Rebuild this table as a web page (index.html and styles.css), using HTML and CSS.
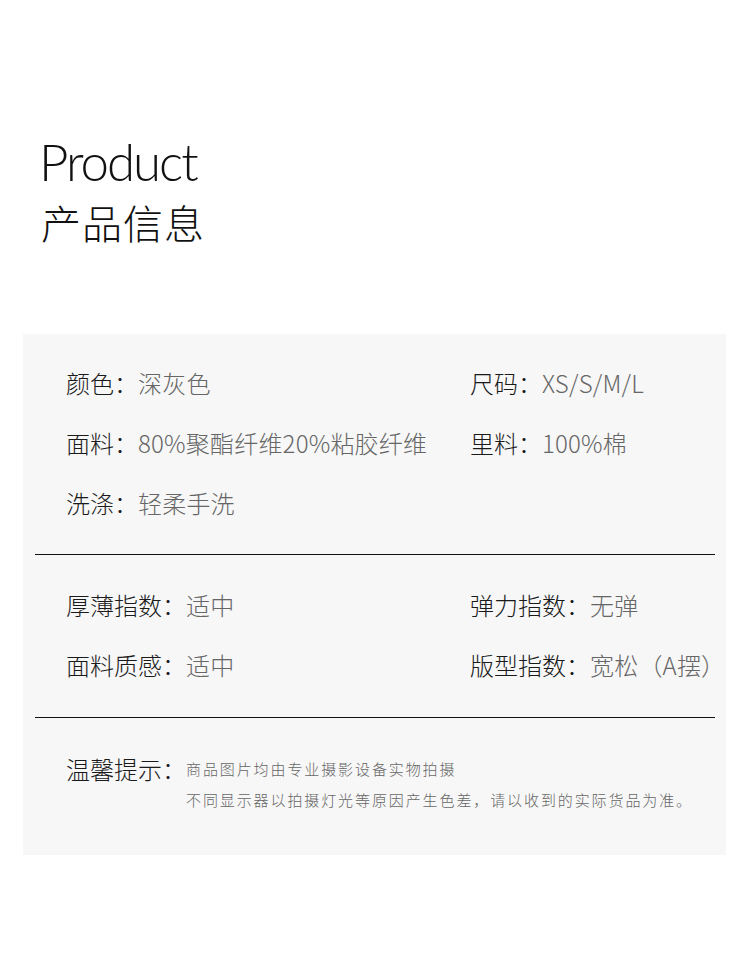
FILE: index.html
```html
<!DOCTYPE html>
<html lang="zh-CN">
<head>
    <meta charset="UTF-8">
    <meta name="viewport" content="width=device-width, initial-scale=1.0">
    <title>Product 产品信息</title>
    <link rel="stylesheet" href="styles.css">
</head>
<body>
    <div id="page">
        <div class="title-block">
            <h1 class="title-en">Product</h1>
            <h2 class="title-cn">产品信息</h2>
        </div>

        <div class="info-panel">
            <div class="info-grid section-basic">
                <div class="info-item"><span class="label">颜色：</span><span class="value">深灰色</span></div>
                <div class="info-item"><span class="label">尺码：</span><span class="value">XS/S/M/L</span></div>
                <div class="info-item"><span class="label">面料：</span><span class="value">80%聚酯纤维20%粘胶纤维</span></div>
                <div class="info-item"><span class="label">里料：</span><span class="value">100%棉</span></div>
                <div class="info-item"><span class="label">洗涤：</span><span class="value">轻柔手洗</span></div>
            </div>

            <div class="divider"></div>

            <div class="info-grid section-index">
                <div class="info-item"><span class="label">厚薄指数：</span><span class="value">适中</span></div>
                <div class="info-item"><span class="label">弹力指数：</span><span class="value">无弹</span></div>
                <div class="info-item"><span class="label">面料质感：</span><span class="value">适中</span></div>
                <div class="info-item"><span class="label">版型指数：</span><span class="value">宽松（A摆）</span></div>
            </div>

            <div class="divider"></div>

            <div class="tips">
                <span class="label">温馨提示：</span>
                <div class="tips-text">
                    <p>商品图片均由专业摄影设备实物拍摄</p>
                    <p>不同显示器以拍摄灯光等原因产生色差，请以收到的实际货品为准。</p>
                </div>
            </div>
        </div>
    </div>
</body>
</html>
```

FILE: styles.css
```css
body {
    margin: 0;
    padding: 0;
    background: #fff;
    font-family: "Noto Sans CJK SC", "Noto Sans", sans-serif;
    color: #222;
}
#page {
    width: 750px;
    height: 953px;
    overflow: hidden;
}

/* 标题 */
.title-block {
    padding: 132px 0 0 39px;
    height: 334px;
    box-sizing: border-box;
}
.title-en {
    margin: 0;
    font-family: "Lato", "Noto Sans", sans-serif;
    font-weight: 300;
    font-size: 51px;
    line-height: 60px;
    letter-spacing: -2px;
    color: #111;
}
.title-cn {
    margin: 0;
    padding-left: 2px;
    font-weight: 300;
    font-size: 40px;
    line-height: 60px;
    letter-spacing: 1px;
    color: #111;
}

/* 信息面板 */
.info-panel {
    margin: 0 24px 0 23px;
    height: 521px;
    box-sizing: border-box;
    background: #f7f7f7;
    padding-top: 19px;
}
.info-grid {
    display: grid;
    grid-template-columns: 404px 1fr;
    padding-left: 43px;
}
.section-basic {
    padding-bottom: 21px;
}
.section-index {
    padding-top: 20px;
    padding-bottom: 22px;
}
.info-item {
    font-size: 24px;
    font-weight: 300;
    line-height: 60px;
    white-space: nowrap;
}
.label {
    color: #1a1a1a;
}
.value {
    color: #666;
    letter-spacing: 0.2px;
}
.divider {
    height: 1px;
    margin: 0 11px 0 12px;
    background: #111;
}

/* 温馨提示 */
.tips {
    display: flex;
    align-items: flex-start;
    padding: 35px 0 0 43px;
}
.tips .label {
    font-size: 24px;
    font-weight: 300;
    line-height: 31px;
    white-space: nowrap;
}
.tips-text p {
    margin: 0;
    font-size: 15px;
    font-weight: 300;
    line-height: 31px;
    letter-spacing: 1.9px;
    color: #666;
}
```
